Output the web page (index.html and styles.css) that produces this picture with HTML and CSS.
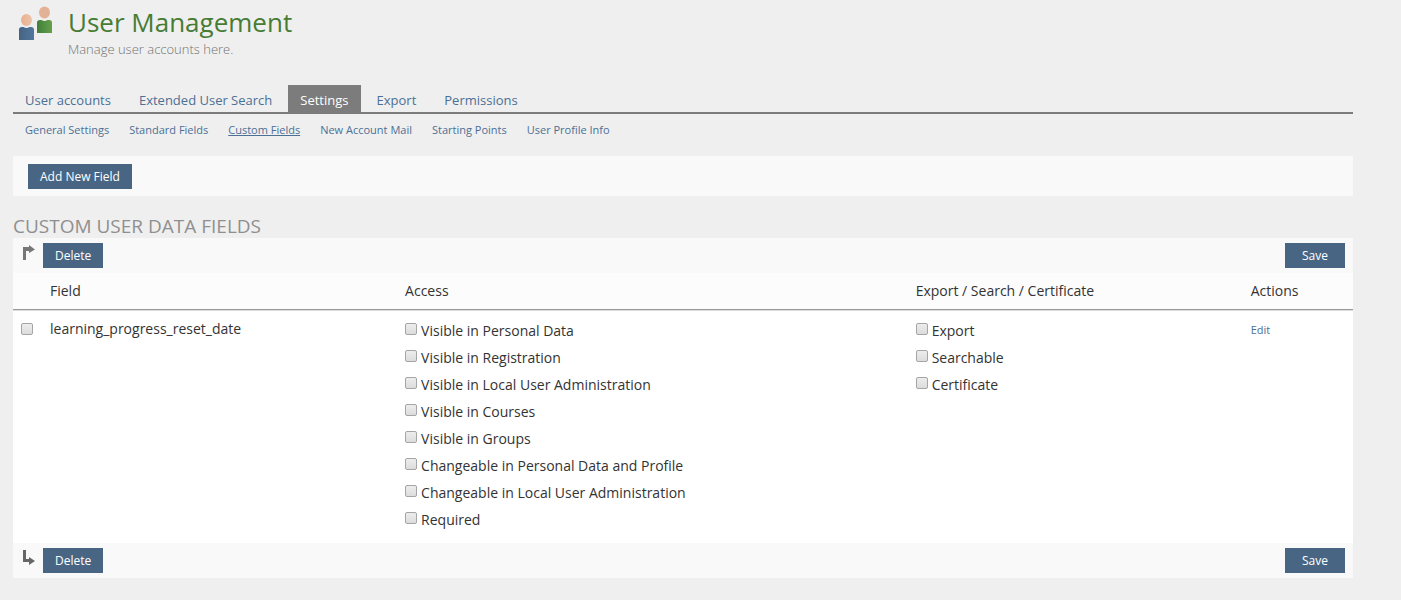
FILE: index.html
```html
<!DOCTYPE html>
<html lang="en">
<head>
<meta charset="utf-8">
<meta name="viewport" content="width=device-width, initial-scale=1">
<title>User Management</title>
<link rel="stylesheet" href="styles.css">
</head>
<body>
<main class="page">
  <header class="page-header">
    <svg class="page-icon" width="45" height="45" viewBox="0 0 45 45" aria-hidden="true">
      <defs>
        <linearGradient id="green"><stop offset="0" stop-color="#41803b"/><stop offset="1" stop-color="#65a04b"/></linearGradient>
        <linearGradient id="blue"><stop offset="0" stop-color="#446482"/><stop offset="1" stop-color="#53769e"/></linearGradient>
        <linearGradient id="skin"><stop offset="0" stop-color="#e9b08f"/><stop offset="1" stop-color="#efc3aa"/></linearGradient>
      </defs>
      <path d="M24 33V22.500Q24 20 27 20H28.500Q31.500 22 34.500 20H36Q39 20 39 22.500V33Z" fill="url(#green)"/>
      <ellipse cx="31.500" cy="12.500" rx="5.500" ry="6" fill="#e2b298"/>
      <path d="M6 40V29.500Q6 27 9 27H10.500Q13.500 29 16.500 27H18Q21 27 21 29.500V40Z" fill="url(#blue)"/>
      <ellipse cx="13.500" cy="20" rx="5.500" ry="6" fill="url(#skin)"/>
    </svg>
    <div>
      <h1 class="page-title">User Management</h1>
      <p class="page-description">Manage user accounts here.</p>
    </div>
  </header>

  <nav class="tabs" aria-label="Sections">
    <a class="tab" href="#accounts">User accounts</a>
    <a class="tab" href="#search">Extended User Search</a>
    <a class="tab tab-active" href="#settings" aria-current="page">Settings</a>
    <a class="tab" href="#export">Export</a>
    <a class="tab" href="#permissions">Permissions</a>
  </nav>
  <nav class="subtabs" aria-label="Settings">
    <a class="subtab" href="#general">General Settings</a>
    <a class="subtab" href="#standard">Standard Fields</a>
    <a class="subtab subtab-active" href="#custom" aria-current="page">Custom Fields</a>
    <a class="subtab" href="#mail">New Account Mail</a>
    <a class="subtab" href="#starting">Starting Points</a>
    <a class="subtab" href="#profile">User Profile Info</a>
  </nav>

  <div class="toolbar">
    <button class="button" type="button">Add New Field</button>
  </div>

  <form class="fields">
    <h2 class="section-title">Custom User Data Fields</h2>
    <div class="commands">
      <svg class="arrow" width="12" height="16" viewBox="0 0 12 16" aria-hidden="true"><path d="M0 15V2H6V0L12 4.500L6 8V6H3V15Z" fill="#777"/></svg>
      <button class="button" type="button">Delete</button>
      <button class="button button-save" type="button">Save</button>
    </div>
    <table class="table">
      <colgroup>
        <col class="col-select"><col class="col-field"><col class="col-access"><col class="col-export"><col>
      </colgroup>
      <thead>
        <tr><td></td><th scope="col">Field</th><th scope="col">Access</th><th scope="col">Export / Search / Certificate</th><th scope="col">Actions</th></tr>
      </thead>
      <tbody>
        <tr>
          <td class="cell-select"><input class="check" type="checkbox" aria-labelledby="field-name"></td>
          <td id="field-name">learning_progress_reset_date</td>
          <td class="cell-options">
            <label class="option"><input class="check" type="checkbox">Visible in Personal Data</label>
            <label class="option"><input class="check" type="checkbox">Visible in Registration</label>
            <label class="option"><input class="check" type="checkbox">Visible in Local User Administration</label>
            <label class="option"><input class="check" type="checkbox">Visible in Courses</label>
            <label class="option"><input class="check" type="checkbox">Visible in Groups</label>
            <label class="option"><input class="check" type="checkbox">Changeable in Personal Data and Profile</label>
            <label class="option"><input class="check" type="checkbox">Changeable in Local User Administration</label>
            <label class="option"><input class="check" type="checkbox">Required</label>
          </td>
          <td class="cell-options">
            <label class="option"><input class="check" type="checkbox">Export</label>
            <label class="option"><input class="check" type="checkbox">Searchable</label>
            <label class="option"><input class="check" type="checkbox">Certificate</label>
          </td>
          <td><a class="edit" href="#edit">Edit</a></td>
        </tr>
      </tbody>
    </table>
    <div class="commands">
      <svg class="arrow" width="12" height="16" viewBox="0 0 12 16" aria-hidden="true"><path d="M0 0H3V9H6V7L12 11L6 15V12H0Z" fill="#666"/></svg>
      <button class="button" type="button">Delete</button>
      <button class="button button-save" type="button">Save</button>
    </div>
  </form>
</main>
</body>
</html>
```

FILE: styles.css
```css
* {
  box-sizing: border-box;
}

body {
  margin: 0;
  background: #efefef;
  color: #333;
  font-family: "Open Sans", sans-serif;
  font-size: 14px;
  line-height: 20px;
}

a {
  color: #4c6f96;
  text-decoration: none;
}

.page {
  padding: 0 48px 20px 13px;
}

.page-header {
  display: flex;
  gap: 10px;
  height: 85px;
}

.page-title {
  margin: 7px 0 0;
  color: #477c33;
  font-size: 26px;
  font-weight: 400;
  line-height: 31px;
}

.page-description {
  margin: 0;
  padding-top: 1px;
  color: #737373;
  font-size: 13px;
  font-weight: 300;
}

.tabs {
  display: flex;
  gap: 4px;
  border-bottom: 2px solid #7c7c7c;
}

.tab {
  padding: 6px 12px 3px;
  font-size: 13px;
  line-height: 18px;
}

.tab:hover {
  background: #e2e2e2;
}

.tab-active,
.tab-active:hover {
  background: #7c7c7c;
  color: #fff;
}

.subtabs {
  display: flex;
  gap: 20px;
  padding: 6px 12px 16px;
  font-size: 11px;
}

.subtab-active {
  text-decoration: underline;
}

.toolbar {
  padding: 8px 15px 7px;
  background: #f9f9f9;
}

.button {
  display: block;
  height: 25px;
  padding: 0 12px;
  border: 0;
  background: #486684;
  color: #fff;
  font: 12px/25px "Open Sans", sans-serif;
  cursor: pointer;
}

.section-title {
  margin: 18px 0 0;
  color: #8f8f8f;
  font-size: 19px;
  font-weight: 400;
  line-height: 24px;
  text-transform: uppercase;
}

.commands {
  display: flex;
  align-items: center;
  gap: 8px;
  height: 35px;
  padding: 0 8px 0 10px;
  background: #f9f9f9;
}

.arrow {
  align-self: flex-start;
  margin-top: 7px;
}

.button-save {
  margin-left: auto;
  padding: 0 17px;
}

.table {
  width: 100%;
  border-spacing: 0;
  table-layout: fixed;
  background: #fff;
}

.col-select { width: 29px; }
.col-field { width: 26.5%; }
.col-access { width: 38.1%; }
.col-export { width: 25%; }

.table th,
.table td {
  padding: 8px;
  font-weight: 400;
  text-align: left;
  vertical-align: top;
}

.table thead th,
.table thead td {
  background: #fcfcfc;
  border-bottom: 1px solid #999;
}

.table tbody td {
  border-top: 1px solid #ddd;
}

.table .cell-options {
  padding: 6px 8px 10px;
}

.table .cell-select {
  padding: 12px 8px;
}

.option {
  display: flex;
  gap: 4px;
  line-height: 27px;
}

.check {
  appearance: none;
  flex: none;
  display: block;
  width: 12px;
  height: 12px;
  margin: 0;
  border: 1px solid #a5a5a5;
  border-radius: 2px;
  background: linear-gradient(#ededed, #dcdcdc);
}

.check:checked {
  background: #486684;
}

.option .check {
  margin-top: 6px;
}

.edit {
  font-size: 11px;
}
```
